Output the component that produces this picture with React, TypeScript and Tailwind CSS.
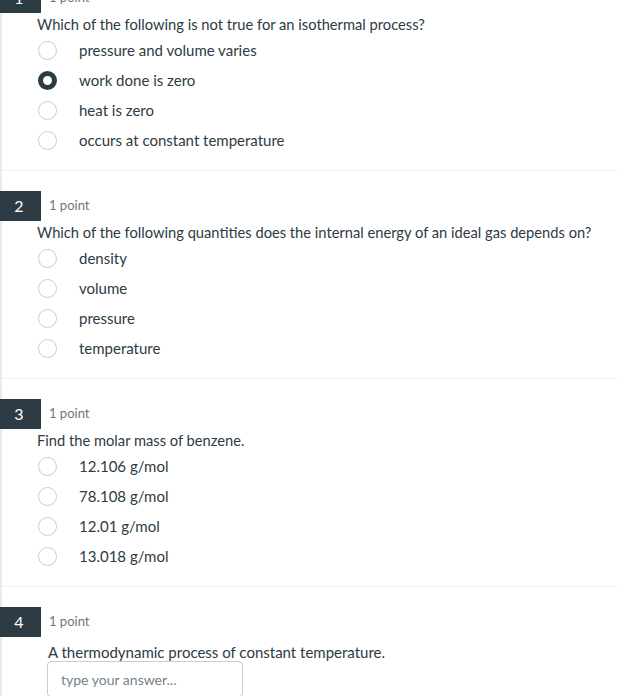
import React from "react";

type Question = {
  num: number;
  text: string;
  options?: string[];
  selected?: number;
};

const questions: Question[] = [
  {
    num: 1,
    text: "Which of the following is not true for an isothermal process?",
    options: [
      "pressure and volume varies",
      "work done is zero",
      "heat is zero",
      "occurs at constant temperature",
    ],
    selected: 1,
  },
  {
    num: 2,
    text: "Which of the following quantities does the internal energy of an ideal gas depends on?",
    options: ["density", "volume", "pressure", "temperature"],
  },
  {
    num: 3,
    text: "Find the molar mass of benzene.",
    options: ["12.106 g/mol", "78.108 g/mol", "12.01 g/mol", "13.018 g/mol"],
  },
  {
    num: 4,
    text: "A thermodynamic process of constant temperature.",
  },
];

function Radio({ checked }: { checked?: boolean }) {
  if (checked) {
    return (
      <span className="box-border block w-[19px] h-[19px] rounded-full border-[5px] border-[#2d3b45] bg-white" />
    );
  }
  return (
    <span className="box-border block w-[19px] h-[19px] rounded-full border border-[#c7cdd1] bg-white" />
  );
}

function QuestionBlock({ q, first }: { q: Question; first: boolean }) {
  return (
    <section
      className={
        first
          ? "pt-[20px] pb-[15px]"
          : "pt-[20px] pb-[15px] border-t border-[#eef0f1]"
      }
    >
      <div className="flex items-center h-[30px]">
        <div className="-ml-[2px] w-[41px] h-[30px] bg-[#2d3b45] text-white text-[16px] flex items-center justify-center pr-[3px]">
          {q.num}
        </div>
        <span className="ml-[8px] text-[13px] text-[#6b7780]">1 point</span>
      </div>

      {q.options ? (
        <>
          <p className="mt-[1px] ml-[35px] text-[14.7px] leading-[20px]">{q.text}</p>
          <ul className="mt-[1px]">
            {q.options.map((opt, i) => (
              <li key={opt} className="flex items-center h-[30px] pl-[36px]">
                <Radio checked={q.selected === i} />
                <span className="ml-[22px] text-[15px]">{opt}</span>
              </li>
            ))}
          </ul>
        </>
      ) : (
        <div className="ml-[45px] mt-[6px]">
          <p className="ml-[1px] text-[15px] leading-[18px]">{q.text}</p>
          <input
            className="block w-[196px] h-[36px] px-[13px] border border-[#c7cdd1] rounded-[4px] text-[14px] placeholder:text-[#73818c] outline-none"
            placeholder="type your answer..."
          />
        </div>
      )}
    </section>
  );
}

export default function App() {
  return (
    <div className="h-[696px] overflow-hidden bg-white font-['Lato',sans-serif] text-[#2d3b45]">
      <div className="border-l-[2px] border-[#e8eaec] min-h-full">
        <div className="-mt-[37px]">
          {questions.map((q, i) => (
            <QuestionBlock key={q.num} q={q} first={i === 0} />
          ))}
        </div>
      </div>
    </div>
  );
}
